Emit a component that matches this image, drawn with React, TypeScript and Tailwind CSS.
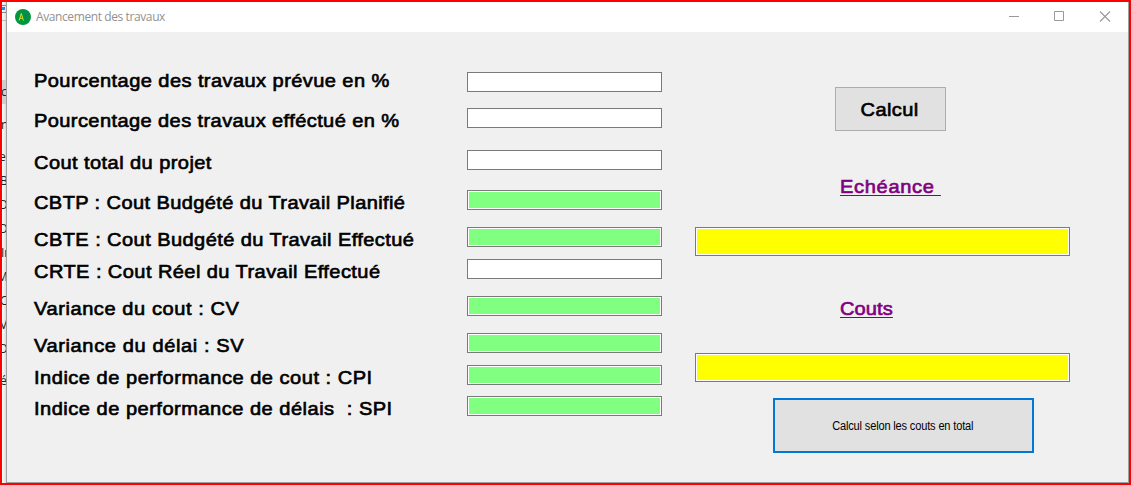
const labels = [
  { text: 'Pourcentage des travaux prévue en %', cls: 'tracking-[0.4px]' },
  { text: 'Pourcentage des travaux efféctué en %', cls: 'mt-[18px] tracking-[0.38px]' },
  { text: 'Cout total du projet', cls: 'mt-[20px] tracking-[0.4px]' },
  { text: 'CBTP : Cout Budgété du Travail Planifié', cls: 'mt-[18px] tracking-[0.37px]' },
  { text: 'CBTE : Cout Budgété du Travail Effectué', cls: 'mt-[15px] tracking-[0.4px]' },
  { text: 'CRTE : Cout Réel du Travail Effectué', cls: 'mt-[10px] tracking-[0.4px]' },
  { text: 'Variance du cout : CV', cls: 'mt-[15px] tracking-[0.54px]' },
  { text: 'Variance du délai : SV', cls: 'mt-[15px] tracking-[0.58px]' },
  { text: 'Indice de performance de cout : CPI', cls: 'mt-[10px] tracking-[0.48px]' },
  { text: 'Indice de performance de délais  : SPI', cls: 'mt-[9px] tracking-[0.47px]' },
];

const fields = [
  'bg-white',
  'mt-[16px] bg-white',
  'mt-[22px] bg-white',
  'mt-[20px] bg-[#80ff80]',
  'mt-[17px] bg-[#80ff80]',
  'mt-[12px] bg-white',
  'mt-[17px] bg-[#80ff80]',
  'mt-[17px] bg-[#80ff80]',
  'mt-[12px] bg-[#80ff80]',
  'mt-[11px] bg-[#80ff80]',
];

const strip = [
  { text: 'c', cls: 'h-6 mt-[15px] bg-[#cfcfcf]', shift: '-ml-px' },
  { text: 'n', cls: 'h-6 mt-[9px]', shift: '-ml-px' },
  { text: 'e', cls: 'h-6 mt-[8px]', shift: '-ml-[3px]' },
  { text: 'B', cls: 'h-6', shift: '-ml-[2px]' },
  { text: 'D', cls: 'h-6', shift: '-ml-[3px]' },
  { text: 'D', cls: 'h-6', shift: '-ml-[3px]' },
  { text: 'Ir', cls: 'h-6', shift: '-ml-px' },
  { text: 'M', cls: 'h-6', shift: '-ml-[5px]' },
  { text: 'C', cls: 'h-6', shift: '-ml-[2px]' },
  { text: 'V', cls: 'h-6', shift: '-ml-[2px]' },
  { text: 'D', cls: 'h-6', shift: '-ml-[3px]' },
  { text: 'és', cls: 'h-6 mt-[8px]', shift: '-ml-[2px]' },
];

const bold = '[-webkit-text-stroke:0.65px_currentColor]';

export default function App() {
  return (
    <div className="flex h-[485px] w-[1131px] overflow-hidden border-2 border-[#ff0000] bg-[#f5f5f5] font-['Liberation_Sans',sans-serif]">
      <aside className="flex w-1 shrink-0 flex-col overflow-hidden bg-linear-to-r from-white to-[#dcdcdc] font-['Open_Sans',sans-serif] text-[12px] text-[#222]">
        <div className="mt-[3px] h-px shrink-0 bg-[#888]" />
        <div className="mt-px h-[3px] w-[3px] shrink-0 bg-[#2f8be0]" />
        <div className="h-[3px] shrink-0 border-b border-[#888]" />
        <div className="h-[8px] shrink-0 border-b border-[#bbb]" />
        <div className="h-[44px] shrink-0" />
        {strip.map((s, i) => (
          <div key={i} className={`flex shrink-0 items-center ${s.cls}`}>
            <span className={s.shift}>{s.text}</span>
          </div>
        ))}
      </aside>
      <main className="flex grow flex-col border-b border-l border-r border-[#9f9f9f] bg-[#f0f0f0]">
        <header className="flex h-[30px] shrink-0 items-center bg-white pl-2">
          <svg className="-mt-px" width="16" height="16" viewBox="0 0 16 16">
            <circle cx="8" cy="8" r="8" fill="#00963f" />
            <path d="M4.2 11.5 6.3 4.5 8.4 11.5M5 9.3h2.6" fill="none" stroke="#d8e01c" strokeWidth="1" />
            <path d="M8.5 5h4.5M10.8 5v6.5" fill="none" stroke="#16757c" strokeWidth="1.1" />
          </svg>
          <h1 className="ml-[5px] font-['Open_Sans',sans-serif] text-[12px] leading-4 tracking-[-0.4px] text-[#929292]">Avancement des travaux</h1>
          <svg className="mr-[17px] -mt-px ml-auto" width="102" height="11" viewBox="0 0 102 11" fill="none" stroke="#999">
            <path d="M0 5.5h10" />
            <path d="M45.5.5h9v9h-9z" />
            <path d="m91 .5 10 10M101 .5l-10 10" strokeWidth="1.1" />
          </svg>
        </header>
        <div className="flex grow">
          <section className={`flex w-[460px] shrink-0 flex-col items-start pt-[38px] pl-[27px] text-[19px] leading-[22px] text-black ${bold}`}>
            {labels.map((l, i) => (
              <span key={i} className={`shrink-0 origin-left scale-x-[1.055] whitespace-pre ${l.cls}`}>{l.text}</span>
            ))}
          </section>
          <section className="flex w-[195px] shrink-0 flex-col pt-10">
            {fields.map((cls, i) => (
              <input key={i} className={`h-5 w-full shrink-0 border border-[#7a7a7a] shadow-[inset_0_0_0_1px_#fff] outline-none ${cls}`} />
            ))}
          </section>
          <section className="ml-[33px] flex w-[375px] flex-col items-start pt-[55px]">
            <button className={`ml-[140px] flex h-[44px] w-[111px] shrink-0 items-center justify-center border border-[#adadad] bg-[#e1e1e1] pt-px pr-[2px] text-[19px] leading-[22px] tracking-[0.4px] text-black ${bold}`}>
              <span className="scale-x-[1.055]">Calcul</span>
            </button>
            <h2 className={`mt-[45px] ml-[145px] origin-left scale-x-[1.055] whitespace-pre text-[19px] leading-[22px] tracking-[0.65px] text-[#800080] underline decoration-1 underline-offset-2 ${bold}`}>{'Echéance '}</h2>
            <input className="mt-[29px] h-[29px] w-full border border-[#7a7a7a] bg-[#ffff00] shadow-[inset_0_0_0_1px_#fff] outline-none" />
            <h2 className={`mt-[42px] ml-[145px] origin-left scale-x-[1.055] text-[19px] leading-[22px] tracking-[0.1px] text-[#800080] underline decoration-1 underline-offset-2 ${bold}`}>Couts</h2>
            <input className="mt-[33px] h-[29px] w-full border border-[#7a7a7a] bg-[#ffff00] shadow-[inset_0_0_0_1px_#fff] outline-none" />
            <button className="mt-4 ml-[78px] flex h-[55px] w-[261px] shrink-0 items-center justify-center border-2 border-[#0078d7] bg-[#e1e1e1] pr-[2px] text-[12px] text-black">
              <span className="scale-x-[0.92] tracking-[-0.17px] whitespace-nowrap">Calcul selon les couts en total</span>
            </button>
          </section>
        </div>
      </main>
    </div>
  );
}
